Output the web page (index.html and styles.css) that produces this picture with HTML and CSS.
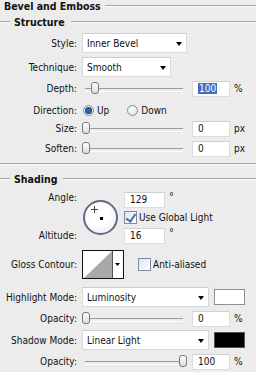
FILE: index.html
```html
<!DOCTYPE html>
<html>
<head>
<meta charset="utf-8">
<link rel="stylesheet" href="styles.css">
</head>
<body>
<div class="panel">
  <div class="title"><span>Bevel and Emboss</span><i class="rule"></i></div>

  <div class="legend"><i class="rule lead"></i><span>Structure</span><i class="rule"></i></div>

  <div class="row r-style"><span class="lbl">Style:</span><div class="select w105">Inner Bevel</div></div>
  <div class="row r-tech"><span class="lbl">Technique:</span><div class="select w89">Smooth</div></div>
  <div class="row r-depth"><span class="lbl">Depth:</span><div class="slider"><i class="thumb" style="left:9px"></i></div><span class="num"><em class="sel">100</em></span><span class="unit">%</span></div>
  <div class="row r-dir"><span class="lbl">Direction:</span><i class="radio on"></i><span class="rtxt">Up</span><i class="radio off"></i><span class="rtxt">Down</span></div>
  <div class="row r-size"><span class="lbl">Size:</span><div class="slider"><i class="thumb" style="left:0px"></i></div><span class="num">0</span><span class="unit">px</span></div>
  <div class="row r-soft"><span class="lbl">Soften:</span><div class="slider"><i class="thumb" style="left:0px"></i></div><span class="num">0</span><span class="unit">px</span></div>

  <i class="rule sep"></i>

  <div class="legend l-shade"><i class="rule lead"></i><span>Shading</span><i class="rule"></i></div>

  <div class="angle">
    <div class="lbls">
      <span class="lbl la">Angle:</span>
      <span class="lbl lb">Altitude:</span>
    </div>
    <div class="dial"><i class="cross"></i><i class="dot"></i></div>
    <div class="acol">
      <div class="deg"><span class="num n41">129</span><span class="dsym">°</span></div>
      <div class="chk"><i class="box on"></i><span>Use Global Light</span></div>
      <div class="deg d2"><span class="num n41">16</span><span class="dsym">°</span></div>
    </div>
  </div>

  <div class="row r-gloss">
    <span class="lbl">Gloss Contour:</span>
    <div class="contour">
      <svg width="42" height="29" viewBox="0 0 42 29">
        <rect x="0.5" y="0.5" width="41" height="28" fill="#fff" stroke="#111"/>
        <polygon points="2,28 30,1 30,28" fill="#a9a9a9"/>
        <line x1="30.5" y1="1" x2="30.5" y2="28" stroke="#555"/>
        <polygon points="33,13 38,13 35.5,16" fill="#000"/>
      </svg>
    </div>
    <div class="chk c-anti"><i class="box"></i><span>Anti-aliased</span></div>
  </div>

  <div class="row r-hl"><span class="lbl">Highlight Mode:</span><div class="select w127">Luminosity</div><i class="swatch white"></i></div>
  <div class="row r-op1"><span class="lbl">Opacity:</span><div class="slider"><i class="thumb" style="left:0px"></i></div><span class="num">0</span><span class="unit">%</span></div>
  <div class="row r-sh"><span class="lbl">Shadow Mode:</span><div class="select w127">Linear Light</div><i class="swatch black"></i></div>
  <div class="row r-op2"><span class="lbl">Opacity:</span><div class="slider"><i class="thumb" style="left:97px"></i></div><span class="num">100</span><span class="unit">%</span></div>
</div>
</body>
</html>
```

FILE: styles.css
```css
* { box-sizing: border-box; }
html, body { margin: 0; padding: 0; }
body {
  background: #ececec;
  width: 256px;
  height: 372px;
  overflow: hidden;
  font-family: "DejaVu Sans Condensed", "DejaVu Sans", sans-serif;
  font-stretch: condensed;
  font-size: 10px;
  color: #111;
}
i { display: block; font-style: normal; }
em { font-style: normal; }

.panel { display: flex; flex-direction: column; }

.rule {
  flex: 1;
  height: 2px;
  border-top: 1px solid #a3a3a3;
  border-bottom: 1px solid #fbfbfb;
}

.title {
  height: 12px;
  display: flex;
  align-items: center;
  padding-left: 4px;
  font-weight: bold;
  font-size: 10.5px;
}
.title span { padding-right: 4px; }

.legend {
  margin-top: 3px;
  height: 13px;
  display: flex;
  align-items: center;
  font-weight: bold;
  font-size: 10.5px;
}
.legend .lead { flex: 0 0 10px; }
.legend span { padding: 0 6px 0 4px; }

.row { display: flex; align-items: center; }
.lbl {
  flex: none;
  width: 77px;
  margin-right: 5px;
  text-align: right;
  white-space: nowrap;
}

.r-style { margin-top: 5px; height: 20px; }
.r-tech { margin-top: 4px; height: 20px; }
.r-depth { margin-top: 3px; height: 17px; }
.r-dir { margin-top: 5px; height: 16px; }
.r-size { margin-top: 2px; height: 17px; }
.r-soft { margin-top: 3px; height: 17px; }

.select {
  position: relative;
  height: 20px;
  background: #fff;
  border: 1px solid #d9d9d9;
  border-top-color: #cdcdcd;
  padding-left: 4px;
  display: flex;
  align-items: center;
}
.select::after {
  content: "";
  position: absolute;
  right: 4px;
  top: 8px;
  border-left: 3.5px solid transparent;
  border-right: 3.5px solid transparent;
  border-top: 4px solid #000;
}
.w105 { width: 105px; }
.w89 { width: 89px; }
.w127 { width: 127px; }

.slider {
  position: relative;
  flex: none;
  width: 105px;
  height: 13px;
}
.slider::before {
  content: "";
  position: absolute;
  left: 3px;
  right: 4px;
  top: 6px;
  height: 2px;
  border-top: 1px solid #9c9c9c;
  border-bottom: 1px solid #fff;
}
.thumb {
  position: absolute;
  top: 0;
  width: 8px;
  height: 12px;
  border: 1px solid #7a7a7a;
  border-radius: 3px;
  background: linear-gradient(#ffffff, #dcdcdc);
}

.num {
  flex: none;
  width: 38px;
  height: 16px;
  margin-left: 5px;
  background: #fff;
  border: 1px solid #dcdcdc;
  border-top-color: #d0d0d0;
  padding-left: 5px;
  line-height: 14px;
}
.sel { background: #3b6ec4; color: #fff; padding: 0 1px; }
.unit { margin-left: 4px; }

.radio {
  flex: none;
  width: 11px;
  height: 11px;
  border-radius: 50%;
  border: 1px solid #8c8c8c;
  background: radial-gradient(circle at 40% 35%, #ffffff, #d8d8d8);
  position: relative;
}
.radio:first-of-type { margin-left: 1px; }
.radio.on::after {
  content: "";
  position: absolute;
  left: 2px;
  top: 2px;
  width: 5px;
  height: 5px;
  border-radius: 50%;
  background: #1b6bb8;
  box-shadow: 0 0 0 1px #2b3f5c;
}
.radio.off { margin-left: 18px; }
.rtxt { margin-left: 3px; }

.sep { flex: none; margin-top: 6px; height: 2px; }

.l-shade { margin-top: 7px; }

.angle {
  margin-top: 7px;
  display: flex;
  height: 52px;
}
.lbls {
  flex: none;
  width: 82px;
  position: relative;
}
.lbls .lbl { display: block; line-height: 12px; }
.la { margin-top: 0; }
.lb { margin-top: 26px; }
.dial {
  flex: none;
  position: relative;
  margin-top: 8px;
  margin-left: 1px;
  width: 35px;
  height: 35px;
  border-radius: 50%;
  border: 2px solid #656a86;
  background: radial-gradient(circle at 45% 40%, #ffffff 40%, #e6e6ee);
}
.dot {
  position: absolute;
  left: 15px;
  top: 15px;
  width: 3px;
  height: 3px;
  background: #000;
}
.cross {
  position: absolute;
  left: 6px;
  top: 4px;
  width: 7px;
  height: 7px;
  background:
    linear-gradient(#000, #000) center / 1px 7px no-repeat,
    linear-gradient(#000, #000) center / 7px 1px no-repeat;
  opacity: 0.75;
}
.acol {
  flex: none;
  margin-left: 6px;
  display: flex;
  flex-direction: column;
}
.deg { display: flex; align-items: flex-start; height: 16px; }
.num.n41 { width: 41px; margin-left: 0; }
.dsym { margin-left: 4px; font-size: 11px; line-height: 9px; }
.d2 { margin-top: 4px; }

.chk { display: flex; align-items: center; height: 13px; margin-top: 3px; }
.chk span { margin-left: 2px; }
.box {
  flex: none;
  width: 13px;
  height: 13px;
  border: 1px solid #7d8aa3;
  background: linear-gradient(135deg, #dfe3ea, #ffffff);
  position: relative;
}
.box.on::after {
  content: "";
  position: absolute;
  left: 3px;
  top: 0px;
  width: 4px;
  height: 8px;
  border-right: 2px solid #4a6aa8;
  border-bottom: 2px solid #4a6aa8;
  transform: rotate(35deg);
}

.r-gloss { margin-top: 6px; height: 29px; }
.contour { flex: none; width: 42px; height: 29px; }
.contour svg { display: block; }
.c-anti { margin-top: 0; margin-left: 14px; }

.r-hl { margin-top: 8px; height: 20px; }
.r-op1 { margin-top: 3px; height: 17px; }
.r-sh { margin-top: 3px; height: 20px; }
.r-op2 { margin-top: 3px; height: 17px; }

.swatch {
  flex: none;
  width: 31px;
  height: 16px;
  margin-left: 5px;
  border: 1px solid #8e8e8e;
}
.swatch.white { background: #fff; }
.swatch.black { background: #000; border-color: #555; }
```
